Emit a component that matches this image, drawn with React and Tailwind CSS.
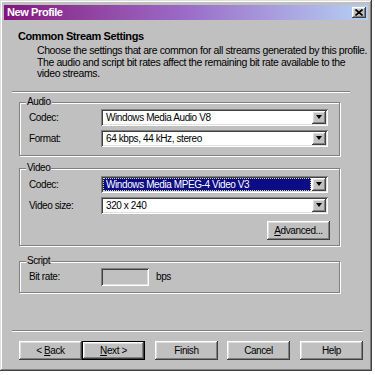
import React from "react";

const raised =
  "shadow-[inset_-1px_-1px_#404040,inset_1px_1px_#ffffff,inset_-2px_-2px_#808080,inset_2px_2px_#dfdfdf]";
const sunken =
  "shadow-[inset_1px_1px_#808080,inset_-1px_-1px_#ffffff,inset_2px_2px_#404040,inset_-2px_-2px_#dfdfdf]";

function DropBtn() {
  return (
    <div className={`w-[14px] h-full bg-[#c0c0c0] flex items-center justify-center ${raised}`}>
      <div className="w-0 h-0 border-l-[3.5px] border-r-[3.5px] border-t-[4px] border-l-transparent border-r-transparent border-t-black" />
    </div>
  );
}

function Combo({ value, selected }) {
  return (
    <div className={`w-[227px] h-[17px] bg-white flex p-[2px] ${sunken}`}>
      {selected ? (
        <div className="flex-1 flex items-center mr-[1px] bg-[#0c0c86] text-white border border-dotted border-[#d8d890] pl-[2px]">
          {value}
        </div>
      ) : (
        <div className="flex-1 flex items-center pl-[3px]">{value}</div>
      )}
      <DropBtn />
    </div>
  );
}

function Row({ label, children }) {
  return (
    <div className="flex items-center h-[17px]">
      <div className="w-[72px] pl-[9px] box-content shrink-0">{label}</div>
      {children}
    </div>
  );
}

function Group({ label, h, children }) {
  return (
    <div
      className={`relative ml-[16px] w-[321px] ${h} border border-[#808080] shadow-[inset_1px_1px_#ffffff,1px_1px_#ffffff]`}
    >
      <div className="absolute -top-[7px] left-[6px] bg-[#c0c0c0] px-[1px] leading-[12px]">{label}</div>
      {children}
    </div>
  );
}

function Button({ children, isDefault, w = "w-[63px]" }) {
  if (isDefault) {
    return (
      <div className={`${w} h-[19px] border border-black flex`}>
        <div className={`flex-1 bg-[#c0c0c0] flex items-center justify-center ${raised}`}>{children}</div>
      </div>
    );
  }
  return (
    <div className={`${w} h-[19px] bg-[#c0c0c0] flex items-center justify-center ${raised}`}>{children}</div>
  );
}

export default function App() {
  return (
    <div
      className="w-[375px] h-[375px] bg-white text-[10px] text-black whitespace-nowrap"
      style={{ fontFamily: "'Liberation Sans', Arial, sans-serif", letterSpacing: "-0.4px" }}
    >
      <div
        className={`w-[372px] h-[371px] bg-[#c0c0c0] p-[3px] flex flex-col shadow-[inset_-1px_-1px_#404040,inset_1px_1px_#dfdfdf,inset_-2px_-2px_#808080,inset_2px_2px_#ffffff]`}
      >
        {/* title bar */}
        <div className="h-[15px] mt-[2px] mx-[1px] bg-gradient-to-r from-[#84107e] via-[#9a6cc8] to-[#b4d0f2] flex items-center pl-[3px] pr-[2px]">
          <div className="text-white font-bold text-[11px] leading-[13px] flex-1">New Profile</div>
          <div className={`w-[14px] h-[11px] bg-[#c0c0c0] flex items-center justify-center ${raised}`}>
            <svg width="8" height="7" viewBox="0 0 8 7">
              <path d="M0.5 0.5 L7.5 6.5 M7.5 0.5 L0.5 6.5" stroke="black" strokeWidth="1.6" />
            </svg>
          </div>
        </div>

        {/* header */}
        <div className="pt-[10px] pl-[15px] font-bold text-[11px] leading-[12px]">Common Stream Settings</div>
        <div className="mt-[3px] pl-[34px] leading-[11.5px] text-[10.5px]">
          <div>Choose the settings that are common for all streams generated by this profile.</div>
          <div>The audio and script bit rates affect the remaining bit rate available to the</div>
          <div>video streams.</div>
        </div>

        <div className="mt-[11px] ml-[9px] w-[338px] h-[2px] border-t border-t-[#808080] border-b border-b-white" />

        {/* Audio */}
        <div className="mt-[9px]">
          <Group label="Audio" h="h-[54px]">
            <div className="pt-[6px] flex flex-col gap-[4px]">
              <Row label="Codec:">
                <Combo value="Windows Media Audio V8" />
              </Row>
              <Row label="Format:">
                <Combo value="64 kbps, 44 kHz, stereo" />
              </Row>
            </div>
          </Group>
        </div>

        {/* Video */}
        <div className="mt-[12px]">
          <Group label="Video" h="h-[78px]">
            <div className="pt-[7px] flex flex-col gap-[4px]">
              <Row label="Codec:">
                <Combo value="Windows Media MPEG-4 Video V3" selected />
              </Row>
              <Row label="Video size:">
                <Combo value="320 x 240" />
              </Row>
              <div className="flex justify-end pr-[9px] mt-[3px]">
                <Button w="w-[63px]">
                  <span>
                    <span className="underline">A</span>dvanced...
                  </span>
                </Button>
              </div>
            </div>
          </Group>
        </div>

        {/* Script */}
        <div className="mt-[15px]">
          <Group label="Script" h="h-[32px]">
            <div className="pt-[6px] flex items-center">
              <div className="w-[72px] pl-[9px] box-content shrink-0">Bit rate:</div>
              <div className={`w-[48px] h-[18px] bg-[#c0c0c0] ${sunken}`} />
              <div className="pl-[7px]">bps</div>
            </div>
          </Group>
        </div>

        <div className="mt-[37px] ml-[9px] w-[351px] h-[2px] border-t border-t-[#808080] border-b border-b-white" />

        {/* buttons */}
        <div className="mt-[9px] ml-[16px] flex items-center">
          <Button>
            <span>
              &lt; <span className="underline">B</span>ack
            </span>
          </Button>
          <Button isDefault>
            <span>
              <span className="underline">N</span>ext &gt;
            </span>
          </Button>
          <div className="w-[10px]" />
          <Button>Finish</Button>
          <div className="w-[9px]" />
          <Button>Cancel</Button>
          <div className="w-[10px]" />
          <Button>Help</Button>
        </div>
      </div>
    </div>
  );
}
